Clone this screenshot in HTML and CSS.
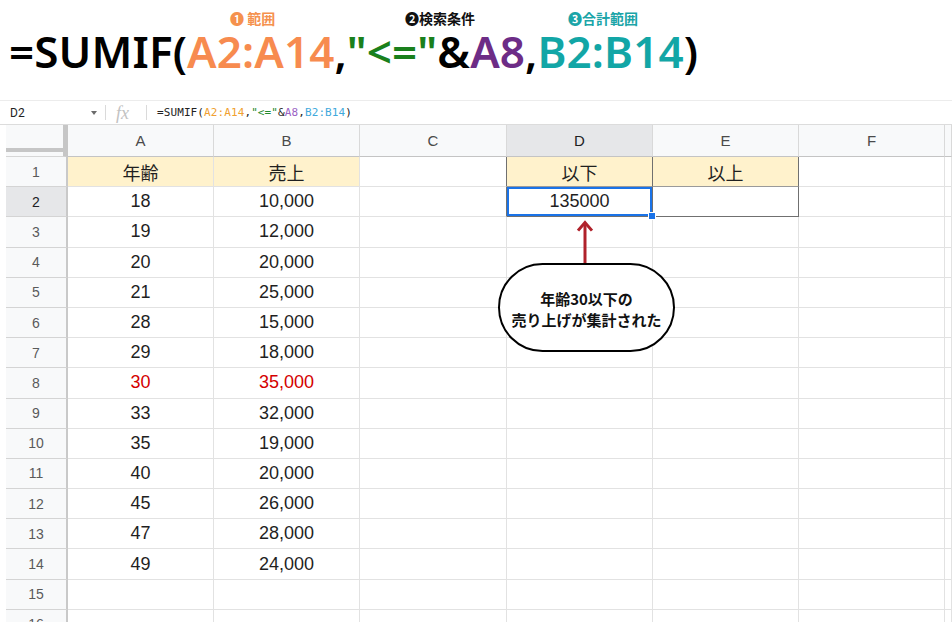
FILE: index.html
```html
<!DOCTYPE html>
<html lang="ja">
<head>
<meta charset="utf-8">
<title>SUMIF</title>
<link rel="stylesheet" href="styles.css">
</head>
<body>
<div class="title">
  <div class="labels">
    <span class="lab lab1">❶ 範囲</span>
    <span class="lab lab2">❷検索条件</span>
    <span class="lab lab3">❸合計範囲</span>
  </div>
  <div class="big"><span>=SUMIF(</span><span class="o">A2:A14</span><span>,</span><span class="g">"&lt;="</span><span>&amp;</span><span class="p">A8</span><span>,</span><span class="t">B2:B14</span><span>)</span></div>
</div>

<div class="sheet">
  <div class="fbar">
    <div class="namebox"><span>D2</span><span class="caret"></span></div>
    <span class="vsep"></span>
    <span class="fx">fx</span>
    <span class="vsep"></span>
    <span class="ftext">=SUMIF(<span class="fo">A2:A14</span>,<span class="fg">"&lt;="</span>&amp;<span class="fp">A8</span>,<span class="fb">B2:B14</span>)</span>
  </div>

  <div class="grid">
    <div class="row head"><div class="corner"></div><div class="ch">A</div><div class="ch">B</div><div class="ch">C</div><div class="ch sel">D</div><div class="ch">E</div><div class="ch">F</div><div class="ch"></div></div>
    <div class="row"><div class="rh">1</div><div class="c hl">年齢</div><div class="c hl">売上</div><div class="c dr"></div><div class="c hl dr mb">以下</div><div class="c hl dr mb">以上</div><div class="c"></div><div class="c"></div></div>
    <div class="row"><div class="rh sel">2</div><div class="c">18</div><div class="c">10,000</div><div class="c dr"></div><div class="c dr db active">135000<span class="handle"></span></div><div class="c dr db"></div><div class="c"></div><div class="c"></div></div>
    <div class="row"><div class="rh">3</div><div class="c">19</div><div class="c">12,000</div><div class="c"></div><div class="c"></div><div class="c"></div><div class="c"></div><div class="c"></div></div>
    <div class="row"><div class="rh">4</div><div class="c">20</div><div class="c">20,000</div><div class="c"></div><div class="c"></div><div class="c"></div><div class="c"></div><div class="c"></div></div>
    <div class="row"><div class="rh">5</div><div class="c">21</div><div class="c">25,000</div><div class="c"></div><div class="c"></div><div class="c"></div><div class="c"></div><div class="c"></div></div>
    <div class="row"><div class="rh">6</div><div class="c">28</div><div class="c">15,000</div><div class="c"></div><div class="c"></div><div class="c"></div><div class="c"></div><div class="c"></div></div>
    <div class="row"><div class="rh">7</div><div class="c">29</div><div class="c">18,000</div><div class="c"></div><div class="c"></div><div class="c"></div><div class="c"></div><div class="c"></div></div>
    <div class="row"><div class="rh">8</div><div class="c red">30</div><div class="c red">35,000</div><div class="c"></div><div class="c"></div><div class="c"></div><div class="c"></div><div class="c"></div></div>
    <div class="row"><div class="rh">9</div><div class="c">33</div><div class="c">32,000</div><div class="c"></div><div class="c"></div><div class="c"></div><div class="c"></div><div class="c"></div></div>
    <div class="row"><div class="rh">10</div><div class="c">35</div><div class="c">19,000</div><div class="c"></div><div class="c"></div><div class="c"></div><div class="c"></div><div class="c"></div></div>
    <div class="row"><div class="rh">11</div><div class="c">40</div><div class="c">20,000</div><div class="c"></div><div class="c"></div><div class="c"></div><div class="c"></div><div class="c"></div></div>
    <div class="row"><div class="rh">12</div><div class="c">45</div><div class="c">26,000</div><div class="c"></div><div class="c"></div><div class="c"></div><div class="c"></div><div class="c"></div></div>
    <div class="row"><div class="rh">13</div><div class="c">47</div><div class="c">28,000</div><div class="c"></div><div class="c"></div><div class="c"></div><div class="c"></div><div class="c"></div></div>
    <div class="row"><div class="rh">14</div><div class="c">49</div><div class="c">24,000</div><div class="c"></div><div class="c"></div><div class="c"></div><div class="c"></div><div class="c"></div></div>
    <div class="row"><div class="rh">15</div><div class="c"></div><div class="c"></div><div class="c"></div><div class="c"></div><div class="c"></div><div class="c"></div><div class="c"></div></div>
    <div class="row"><div class="rh">16</div><div class="c"></div><div class="c"></div><div class="c"></div><div class="c"></div><div class="c"></div><div class="c"></div><div class="c"></div></div>
  </div>

  <svg class="arrow" width="20" height="44" viewBox="0 0 20 44">
    <path d="M10 3 L10 44" stroke="#b0222b" stroke-width="3" fill="none"/>
    <path d="M4 9.5 L10 2.5 L16 9.5" stroke="#b0222b" stroke-width="3" fill="none" stroke-linecap="square"/>
  </svg>
  <div class="bubble">年齢30以下の<br>売り上げが集計された</div>
</div>
</body>
</html>
```

FILE: styles.css
```css
html, body {
  margin: 0;
  padding: 0;
  background: #ffffff;
}
body {
  width: 952px;
  height: 622px;
  overflow: hidden;
  font-family: "Liberation Sans", "Noto Sans CJK JP", sans-serif;
}

/* ---------- title ---------- */
.title {
  height: 100px;
}
.labels {
  display: flex;
  padding: 10px 0 0 230px;
  height: 16px;
  line-height: 16px;
  font-family: "Noto Sans CJK JP", "DejaVu Sans", sans-serif;
  font-weight: 700;
  font-size: 14px;
  white-space: nowrap;
}
.lab1 { width: 175px; color: #f5914e; }
.lab2 { width: 163px; color: #111111; }
.lab3 { color: #1ba5a8; }

.big {
  margin-top: 3px;
  padding-left: 9px;
  height: 44px;
  line-height: 44px;
  font-family: "Noto Sans", "Open Sans", sans-serif;
  font-weight: 600;
  font-size: 44px;
  letter-spacing: 0.1px;
  white-space: nowrap;
  color: #000000;
}
.big .o { color: #f78b4f; }
.big .g { color: #1a801c; }
.big .p { color: #6d2c86; }
.big .t { color: #12a6a6; }

/* ---------- sheet ---------- */
.sheet {
  position: relative;
  margin-left: 6px;
  width: 946px;
}
.fbar {
  display: flex;
  align-items: center;
  box-sizing: border-box;
  height: 25px;
  border-top: 1px solid #ececec;
  border-bottom: 1px solid #dcdcdc;
  margin-left: -6px;
  padding-left: 6px;
}
.namebox {
  display: flex;
  align-items: center;
  justify-content: space-between;
  width: 99px;
  box-sizing: border-box;
  padding: 0 8px 0 4px;
  font-family: "Roboto", "Liberation Sans", sans-serif;
  font-size: 12px;
  color: #222;
}
.caret {
  width: 0;
  height: 0;
  border-left: 3.5px solid transparent;
  border-right: 3.5px solid transparent;
  border-top: 4px solid #6b6b6b;
}
.vsep {
  width: 1px;
  height: 15px;
  background: #dadada;
}
.fx {
  width: 40px;
  padding-left: 10px;
  box-sizing: border-box;
  font-family: "Liberation Serif", serif;
  font-style: italic;
  font-size: 18px;
  color: #c2c2c2;
  line-height: 16px;
}
.ftext {
  margin-left: 10px;
  font-family: "DejaVu Sans Mono", "Liberation Mono", monospace;
  font-size: 11px;
  letter-spacing: 0.1px;
  color: #222;
}
.fo { color: #f0a030; }
.fg { color: #1f8a2e; }
.fp { color: #9a62c4; }
.fb { color: #3fa9dc; }

.grid {
  display: flex;
  flex-direction: column;
}
.row {
  display: grid;
  grid-template-columns: 62px 146px 146px 147px 146px 146px 146px 1fr;
  height: 30.2px;
}
.row.head {
  height: 32px;
}
.row > div {
  box-sizing: border-box;
  display: flex;
  align-items: center;
  justify-content: center;
  position: relative;
}
.corner {
  background:
    linear-gradient(#c6c6c6, #c6c6c6) left 0 bottom 4px / 100% 4px no-repeat,
    #f8f9fa;
  border-right: 5px solid #c6c6c6;
  border-bottom: 1px solid #d6d6d6;
}
.ch {
  background: #f8f9fa;
  border-right: 1px solid #d9d9d9;
  border-bottom: 1px solid #c4c4c4;
  font-size: 15px;
  color: #4a4a4a;
}
.ch.sel {
  background: #e6e7e9;
  color: #202124;
}
.rh {
  background: #f8f9fa;
  border-right: 2px solid #c9c9c9;
  border-bottom: 1px solid #d4d4d4;
  font-size: 14px;
  color: #5a5a5a;
}
.rh.sel {
  background: #e6e7e9;
  color: #202124;
}
.c {
  border-right: 1px solid #e2e2e2;
  border-bottom: 1px solid #e2e2e2;
  font-size: 18px;
  color: #1f1f1f;
  white-space: nowrap;
}
.c.hl {
  background: #fff2cc;
}
.c.red {
  color: #d40000;
}
.c.dr {
  border-right: 1px solid #707070;
}
.c.mb {
  border-bottom: 1px solid #9a9a9a;
}
.c.db {
  border-bottom: 1px solid #707070;
}
.c.active {
  box-shadow: inset 0 0 0 2px #1a73e8;
}
.handle {
  position: absolute;
  right: -4px;
  bottom: -4px;
  width: 6px;
  height: 6px;
  background: #1a73e8;
  border: 1px solid #ffffff;
  z-index: 2;
}

/* ---------- annotation ---------- */
.arrow {
  position: absolute;
  left: 569px;
  top: 120px;
}
.bubble {
  position: absolute;
  left: 492px;
  top: 163px;
  width: 177px;
  height: 89px;
  box-sizing: border-box;
  border: 2.5px solid #000000;
  border-radius: 45px;
  background: #ffffff;
  display: flex;
  align-items: center;
  justify-content: center;
  text-align: center;
  font-family: "Noto Sans CJK JP", sans-serif;
  font-weight: 700;
  font-size: 15px;
  line-height: 21px;
  color: #111111;
  padding-top: 2px;
}
```
